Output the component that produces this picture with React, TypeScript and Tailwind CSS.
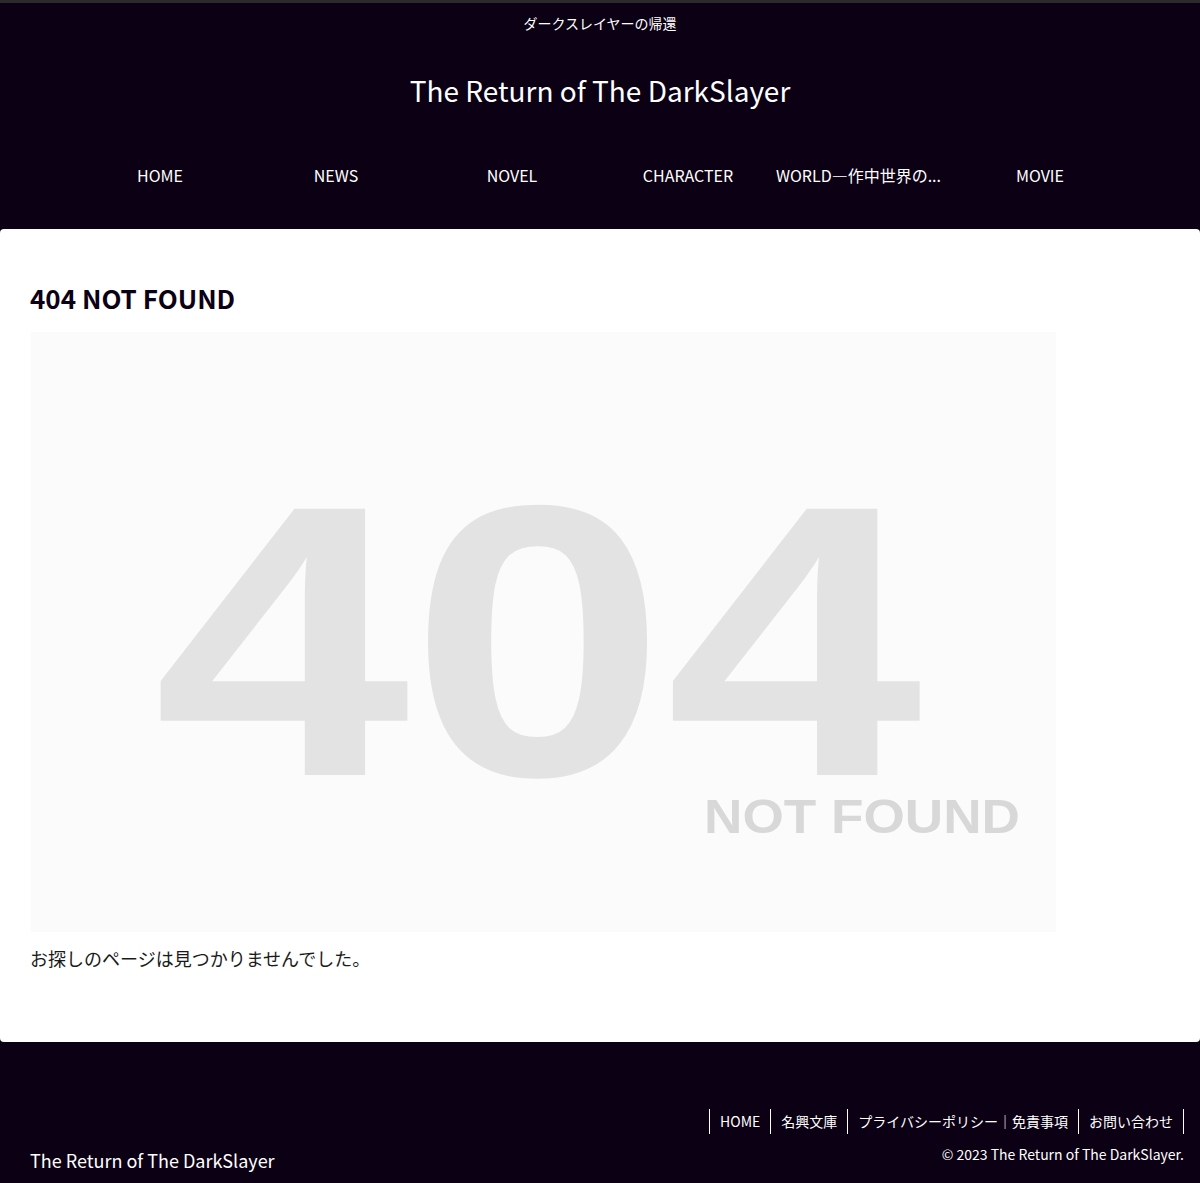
import React from "react";

const navItems = ["HOME", "NEWS", "NOVEL", "CHARACTER", "WORLD―作中世界の...", "MOVIE"];

function NotFoundImage() {
  return (
    <svg width="1025" height="600" viewBox="0 0 1025 600" className="block">
      <rect x="0" y="0" width="1025" height="600" fill="#fbfbfb" />
      <g transform="translate(122.7 443) scale(1.19 1)">
        <text
          x="0"
          y="0"
          fontFamily="'Liberation Sans', Arial, sans-serif"
          fontWeight="700"
          fontSize="387"
          fill="#e3e3e3"
        >
          404
        </text>
      </g>
      <g transform="translate(673 501) scale(1.085 1)">
        <text
          x="0"
          y="0"
          fontFamily="'Liberation Sans', Arial, sans-serif"
          fontWeight="700"
          fontSize="49"
          fill="#d8d8d8"
        >
          NOT FOUND
        </text>
      </g>
    </svg>
  );
}

export default function App() {
  return (
    <div
      className="bg-[#0b0014] text-white"
      style={{ fontFamily: "'Noto Sans CJK JP', 'Noto Sans', sans-serif" }}
    >
      <div className="h-[3px] bg-[#2b2b2b]" />
      <header className="flex flex-col items-center">
        <div className="pt-[10px] text-[14px] leading-[20px]">ダークスレイヤーの帰還</div>
        <h1 className="mt-[37px] text-[28px] leading-[40px] font-normal">The Return of The DarkSlayer</h1>
        <nav className="mt-[53px] flex">
          {navItems.map((item) => (
            <div
              key={item}
              className={
                item.startsWith("WORLD")
                  ? "w-[176px] whitespace-nowrap overflow-hidden text-left text-[16px] leading-[24px]"
                  : "w-[176px] whitespace-nowrap overflow-hidden text-center text-[16px] leading-[24px]"
              }
            >
              {item}
            </div>
          ))}
        </nav>
      </header>

      <main className="mt-[42px] rounded-[4px] bg-white px-[30px] pt-[51px] pb-[70px] text-[#0b0014]">
        <h2 className="text-[26px] font-bold leading-[36px]">404 NOT FOUND</h2>
        <div className="mt-[16px] pl-px">
          <NotFoundImage />
        </div>
        <p className="mt-[12px] text-[18px] leading-[28px] text-[#1a1a1a]">お探しのページは見つかりませんでした。</p>
      </main>

      <footer className="flex items-end justify-between pl-[30px] pr-[16px] pt-[67px] pb-[9px]">
        <div className="text-[18px] leading-[28px]">The Return of The DarkSlayer</div>
        <div className="flex flex-col items-end pb-[10px]">
          <ul className="flex text-[14px] leading-[25px]">
            <li className="border-l border-white px-[10px]">HOME</li>
            <li className="border-l border-white px-[10px]">名興文庫</li>
            <li className="border-l border-white px-[10px]">プライバシーポリシー｜免責事項</li>
            <li className="border-l border-r border-white px-[10px]">お問い合わせ</li>
          </ul>
          <div className="mt-[10px] text-[14px] leading-[20px]">© 2023 The Return of The DarkSlayer.</div>
        </div>
      </footer>
    </div>
  );
}
